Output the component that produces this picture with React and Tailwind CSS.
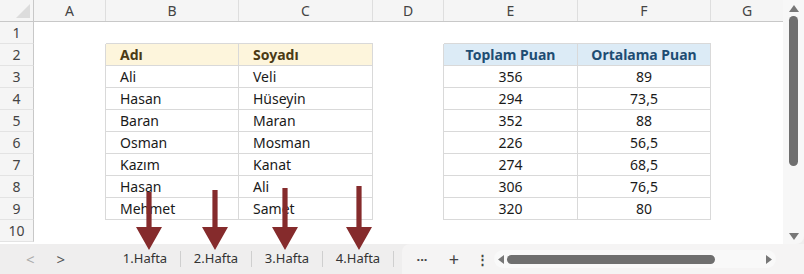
import React from "react";

const colWidths = ["w-[72px]", "w-[133px]", "w-[134px]", "w-[71px]", "w-[134px]", "w-[133px]", "w-[72px]"];
const letters = ["A", "B", "C", "D", "E", "F", "G"];

const data = [
  ["Ali", "Veli", "356", "89"],
  ["Hasan", "Hüseyin", "294", "73,5"],
  ["Baran", "Maran", "352", "88"],
  ["Osman", "Mosman", "226", "56,5"],
  ["Kazım", "Kanat", "274", "68,5"],
  ["Hasan", "Ali", "306", "76,5"],
  ["Mehmet", "Samet", "320", "80"],
];

function cellContent(r, c) {
  if (r === 2) {
    if (c === 1) return "Adı";
    if (c === 2) return "Soyadı";
    if (c === 4) return "Toplam Puan";
    if (c === 5) return "Ortalama Puan";
    return "";
  }
  if (r >= 3 && r <= 9) {
    const row = data[r - 3];
    if (c === 1) return row[0];
    if (c === 2) return row[1];
    if (c === 4) return row[2];
    if (c === 5) return row[3];
  }
  return "";
}

function cellClass(r, c) {
  const inRows = r >= 2 && r <= 9;
  const t1 = inRows && (c === 1 || c === 2);
  const t2 = inRows && (c === 4 || c === 5);
  let cls = "h-[22px] shrink-0 flex items-center border-[#d9d9d9] ";
  if (t1 || t2 || (inRows && (c === 0 || c === 3))) cls += "border-r ";
  if (t1 || t2 || (r === 1 && (c === 1 || c === 2 || c === 4 || c === 5))) cls += "border-b ";
  if (t1) cls += "pl-[14px] ";
  if (t2) cls += "justify-center ";
  if (r === 2 && t1) cls += "bg-[#fdf5dc] font-bold text-[#4a3a15] ";
  else if (r === 2 && t2) cls += "bg-[#dcebf6] font-bold text-[#1e4d73] ";
  else cls += "text-[#1a1a1a] ";
  return cls;
}

function Arrow({ x, top }) {
  const sw = 2.6;
  const hw = 13;
  const headTop = 227;
  const tip = 250;
  const pts = `${x - sw},${top} ${x + sw},${top} ${x + sw},${headTop} ${x + hw},${headTop} ${x},${tip} ${x - hw},${headTop} ${x - sw},${headTop}`;
  return <polygon points={pts} fill="#852b2c" />;
}

export default function App() {
  const rows = [1, 2, 3, 4, 5, 6, 7, 8, 9, 10];
  return (
    <div className="relative w-[804px] h-[274px] overflow-hidden bg-[#efeeee] font-['Noto_Sans',sans-serif] text-[14px]">
      <div className="flex h-[244px]">
        <div className="w-[783px] shrink-0 bg-white">
          {/* column header */}
          <div className="flex h-[22px] bg-[#f5f5f5] border-b border-[#c8c8c8]">
            <div className="w-[34px] shrink-0 border-r border-[#c8c8c8] relative">
              <div className="absolute right-[3px] bottom-[3px] w-0 h-0 border-l-[14px] border-l-transparent border-b-[14px] border-b-[#dcdcdc]" />
            </div>
            {letters.map((l, i) => (
              <div
                key={l}
                className={`${colWidths[i]} shrink-0 flex items-center justify-center text-[#444] ${i < 6 ? "border-r border-[#dedede]" : ""}`}
              >
                {l}
              </div>
            ))}
          </div>
          {rows.map((r) => (
            <div key={r} className="flex h-[22px]">
              <div className="w-[34px] h-[22px] shrink-0 flex items-center justify-center bg-[#f5f5f5] border-r border-r-[#c8c8c8] border-b border-b-[#e3e3e3] text-[#444]">
                {r}
              </div>
              {colWidths.map((w, c) => (
                <div key={c} className={`${w} ${cellClass(r, c)}`}>
                  {cellContent(r, c)}
                </div>
              ))}
            </div>
          ))}
        </div>
        {/* vertical scrollbar */}
        <div className="w-[21px] shrink-0 bg-[#f7f7f7] rounded-br-[8px] flex flex-col items-center pt-[5px] pb-[4px]">
          <svg width="10" height="7" viewBox="0 0 10 7"><polygon points="5,0 10,7 0,7" fill="#777" /></svg>
          <div className="w-[9px] h-[150px] mt-[4px] rounded-full bg-[#6f6f6f]" />
          <div className="flex-1" />
          <svg width="10" height="7" viewBox="0 0 10 7"><polygon points="0,0 10,0 5,7" fill="#777" /></svg>
        </div>
      </div>
      {/* tab bar */}
      <div className="flex items-center h-[30px] text-[13px] text-[#333]">
        <div className="w-[110px] shrink-0 flex items-center">
          <span className="ml-[26px] text-[#aaa] text-[15px] leading-none">&lt;</span>
          <span className="ml-[22px] text-[#555] text-[15px] leading-none">&gt;</span>
        </div>
        {["1.Hafta", "2.Hafta", "3.Hafta", "4.Hafta"].map((t, i) => (
          <div key={t} className="w-[71px] shrink-0 flex items-center">
            <div className="flex-1 text-center">{t}</div>
            <div className="w-px h-[16px] bg-[#cfcfcf]" />
          </div>
        ))}
        <div className="ml-[8px] flex-1 h-full bg-[#f5f4f4] rounded-tl-[8px] flex items-center">
          <span className="ml-[10px] w-[20px] text-center text-[#444] font-bold leading-none">···</span>
          <span className="ml-[12px] w-[20px] text-center text-[#444] text-[18px] leading-none">+</span>
          <span className="ml-[12px] w-[10px] text-center text-[#444] font-bold leading-none">⋮</span>
          <div className="ml-[8px] w-[282px] h-[18px] bg-[#f9f9f9] rounded-full flex items-center px-[4px]">
            <svg width="6" height="9" viewBox="0 0 6 9"><polygon points="6,0 6,9 0,4.5" fill="#777" /></svg>
            <div className="ml-[3px] w-[208px] h-[9px] rounded-full bg-[#6f6f6f]" />
            <div className="flex-1" />
            <svg width="6" height="9" viewBox="0 0 6 9"><polygon points="0,0 6,4.5 0,9" fill="#777" /></svg>
          </div>
        </div>
      </div>
      <svg className="absolute inset-0 pointer-events-none" width="804" height="274">
        <Arrow x={149} top={192} />
        <Arrow x={215} top={190} />
        <Arrow x={285} top={188} />
        <Arrow x={359} top={186} />
      </svg>
    </div>
  );
}
